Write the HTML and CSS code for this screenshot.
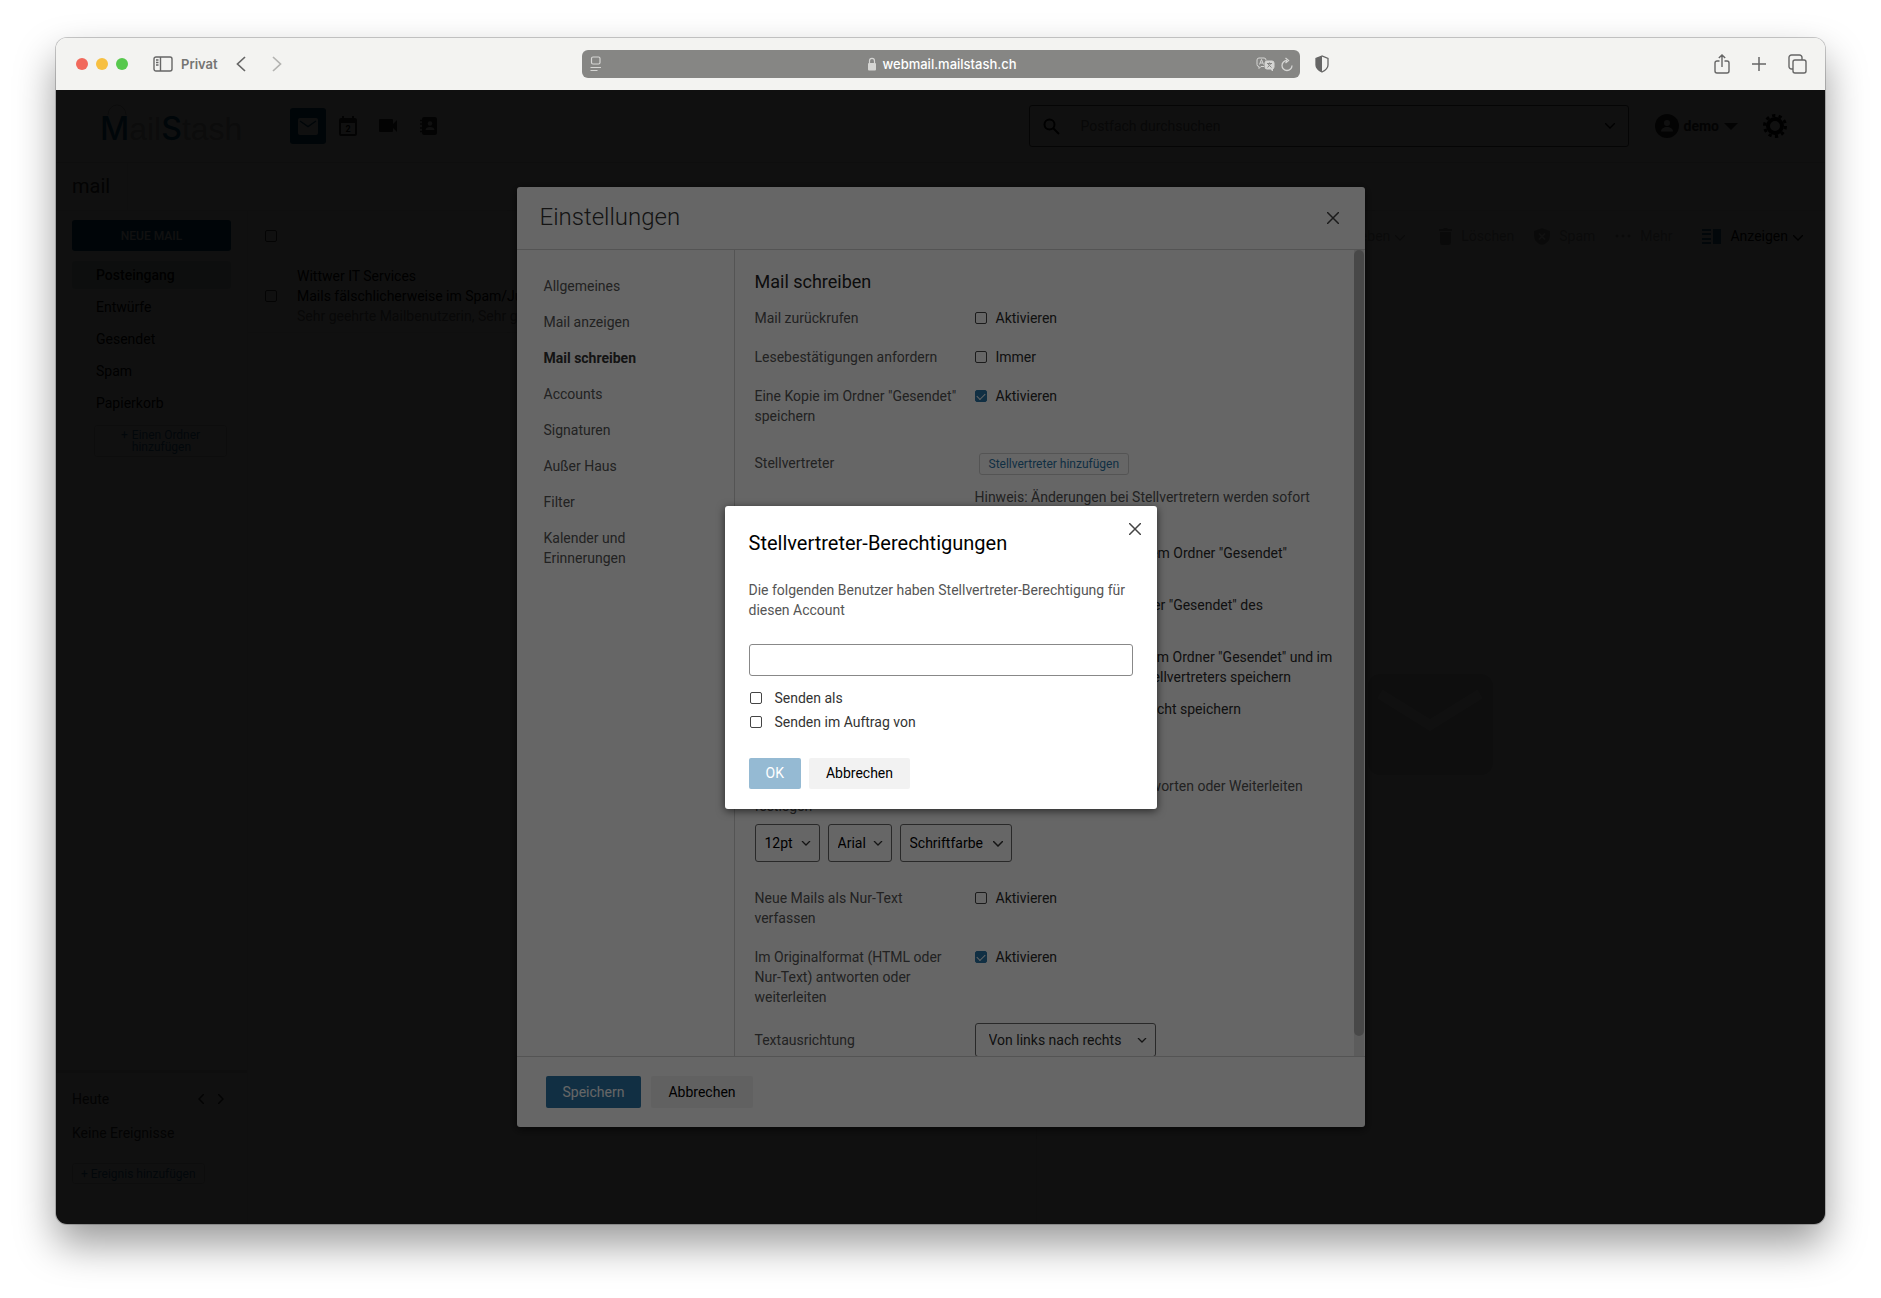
FILE: index.html
```html
<!DOCTYPE html>
<html lang="de">
<head>
    <meta charset="UTF-8">
    <meta name="viewport" content="width=device-width, initial-scale=1.0">
    <title>MailStash - Einstellungen</title>
    <link rel="stylesheet" href="styles.css">
</head>
<body>
    <div class="window">
        <!-- Browser toolbar -->
        <div class="browser-bar">
            <div class="bar-left">
                <span class="light red"></span>
                <span class="light yellow"></span>
                <span class="light green"></span>
                <svg class="icon-sidebar" width="20" height="16" viewBox="0 0 20 16" fill="none" stroke="currentColor" stroke-width="1.4"><rect x="1" y="1" width="18" height="14" rx="2"/><path d="M7.5 1v14M3 4h2.5M3 6.5h2.5M3 9h2.5"/></svg>
                <span class="private">Privat</span>
                <svg class="icon-back" width="10" height="16" viewBox="0 0 10 16" fill="none" stroke="currentColor" stroke-width="1.7"><path d="M9 1L1.5 8 9 15"/></svg>
                <svg class="icon-forward" width="10" height="16" viewBox="0 0 10 16" fill="none" stroke="currentColor" stroke-width="1.7"><path d="M1 1l7.5 7L1 15"/></svg>
            </div>
            <div class="address">
                <svg width="12" height="16" viewBox="0 0 12 16" fill="none" stroke="currentColor" stroke-width="1.2"><rect x="1.5" y="1" width="8.5" height="7" rx="1.5"/><path d="M.5 11.5h10.5M.5 14.5h7"/></svg>
                <div class="host">
                    <svg width="10" height="14" viewBox="0 0 10 14"><rect x="1" y="6" width="8" height="7.5" rx="1" fill="currentColor"/><path d="M2.5 6V4a2.5 2.7 0 0 1 5 0v2" fill="none" stroke="currentColor" stroke-width="1.2"/></svg>
                    <span>webmail.mailstash.ch</span>
                </div>
                <div class="address-actions">
                    <svg width="19" height="14" viewBox="0 0 19 14" fill="none" stroke="currentColor"><path d="M8 9.5H5L3 11.5v-2a2 2 0 0 1-2-2V3a2 2 0 0 1 2-2h5a2 2 0 0 1 2 2v.5M3.500 7.500l2-5 2 5M4.200 6h2.600"/><rect x="9" y="4" width="9" height="8" rx="2" fill="currentColor"/><path d="M15 12l1.500 2V11" fill="currentColor"/><path d="M11 6.500h5M13.500 5.500v1M15 6.500l-3.500 4M12 7l3.500 3.500" stroke="#868684"/></svg>
                    <svg width="12" height="15" viewBox="0 0 12 15" fill="none" stroke="currentColor" stroke-width="1.3"><path d="M6 3.500A5 5 0 1 0 11 8.500M4.500 1l3 2.500-3 2.500"/></svg>
                </div>
            </div>
            <div class="bar-right">
                <svg width="14" height="18" viewBox="0 0 14 18"><path d="M7 1L1 3.500V10c0 3.500 3 5.500 6 7 3-1.500 6-3.500 6-7V3.500z" fill="none" stroke="currentColor" stroke-width="1.3"/><path d="M7 1L1 3.500V10c0 3.500 3 5.500 6 7z" fill="currentColor"/></svg>
                <div class="bar-actions">
                    <svg width="16" height="20" viewBox="0 0 16 20" fill="none" stroke="currentColor" stroke-width="1.4"><path d="M5.500 7H3a2 2 0 0 0-2 2v8a2 2 0 0 0 2 2h10a2 2 0 0 0 2-2V9a2 2 0 0 0-2-2h-2.500M8 13V1M4.800 4L8 1l3.200 3"/></svg>
                    <svg width="14" height="14" viewBox="0 0 14 14" fill="none" stroke="currentColor" stroke-width="1.5"><path d="M7 0v14M0 7h14"/></svg>
                    <svg width="19" height="20" viewBox="0 0 19 20" fill="none" stroke="currentColor" stroke-width="1.4"><rect x="5" y="6" width="13" height="13" rx="2"/><path d="M5 15H3.500A2.500 2.500 0 0 1 1 12.500v-9A2.500 2.500 0 0 1 3.500 1h8A2.500 2.500 0 0 1 14 3.500V6"/></svg>
                </div>
            </div>
        </div>

        <!-- Webmail page -->
        <div class="page">
            <header class="app-header">
                <div class="logo">
                    <svg class="logo-handle" width="20" height="12" viewBox="0 0 20 12" fill="none" stroke="currentColor"><path d="M1 12a9 10 0 0 1 18 0"/></svg>
                    <b>M</b>ail<b>S</b>tash
                </div>
                <nav class="app-nav">
                    <a href="#" class="app-link active" aria-label="Mail"><svg width="20" height="17" viewBox="0 0 20 17"><rect width="20" height="17" rx="2" fill="#fff"/><path d="M2 3l8 5.500L18 3" fill="none" stroke="#00507d" stroke-width="1.5"/></svg></a>
                    <a href="#" class="app-link" aria-label="Kalender"><svg width="18" height="20" viewBox="0 0 18 20"><path d="M3 0h2v2h8V0h2v2h1a2 2 0 0 1 2 2v14a2 2 0 0 1-2 2H2a2 2 0 0 1-2-2V4a2 2 0 0 1 2-2h1zM2 7v11h14V7z" fill="currentColor"/><text x="9" y="16" font-size="9" font-weight="700" text-anchor="middle">2</text></svg></a>
                    <a href="#" class="app-link" aria-label="Video"><svg width="18" height="14" viewBox="0 0 18 14"><path d="M1 0h12a1 1 0 0 1 1 1v4l4-4v12l-4-4v3a1 1 0 0 1-1 1H1a1 1 0 0 1-1-1V1a1 1 0 0 1 1-1z" fill="currentColor"/></svg></a>
                    <a href="#" class="app-link" aria-label="Kontakte"><svg width="17" height="18" viewBox="0 0 17 18"><rect x="2" width="15" height="18" rx="2" fill="currentColor"/><path d="M0 3.500h4M0 7h4M0 11h4M0 14.500h4" stroke="currentColor" stroke-width="1.5"/><circle cx="10" cy="6.500" r="2.200" fill="#fff"/><path d="M5.500 13c0-4 9-4 9 0z" fill="#fff"/></svg></a>
                </nav>
                <div class="search">
                    <svg width="17" height="17" viewBox="0 0 17 17" fill="none" stroke="currentColor" stroke-width="2"><circle cx="6.500" cy="6.500" r="5"/><path d="M10 10l6 6"/></svg>
                    <input type="text" placeholder="Postfach durchsuchen" aria-label="Postfach durchsuchen">
                    <svg width="10" height="6" viewBox="0 0 10 6" fill="none" stroke="currentColor" stroke-width="1.3"><path d="M0 0l5 5 5-5"/></svg>
                </div>
                <button class="user">
                    <svg width="24" height="24" viewBox="0 0 24 24"><circle cx="12" cy="12" r="12" fill="currentColor"/><circle cx="12" cy="9" r="3" fill="#fff"/><path d="M6 17.500c0-6 12-6 12 0z" fill="#fff"/></svg>
                    <span>demo</span>
                    <svg width="14" height="7" viewBox="0 0 14 7"><path d="M0 0h14L7 7z" fill="currentColor"/></svg>
                </button>
                <button class="gear" aria-label="Einstellungen">
                    <svg width="24" height="24" viewBox="0 0 24 24" fill="none" stroke="currentColor"><circle cx="12" cy="12" r="7" stroke-width="4"/><circle cx="12" cy="12" r="10.500" stroke-width="3" stroke-dasharray="3.300 3.300"/></svg>
                </button>
            </header>

            <div class="tabs">
                <a href="#" class="tab">mail</a>
            </div>

            <div class="main">
                <aside class="sidebar">
                    <button class="new-mail">NEUE MAIL</button>
                    <ul class="folders">
                        <li class="selected">Posteingang</li>
                        <li>Entwürfe</li>
                        <li>Gesendet</li>
                        <li>Spam</li>
                        <li>Papierkorb</li>
                    </ul>
                    <button class="outline-btn add-folder"><span>+</span><span>Einen Ordner hinzufügen</span></button>
                    <div class="mini-calendar">
                        <div class="mini-head">
                            <span>Heute</span>
                            <div class="mini-nav">
                                <svg width="6" height="10" viewBox="0 0 6 10" fill="none" stroke="currentColor" stroke-width="1.5"><path d="M6 0L1 5l5 5"/></svg>
                                <svg width="6" height="10" viewBox="0 0 6 10" fill="none" stroke="currentColor" stroke-width="1.5"><path d="M0 0l5 5-5 5"/></svg>
                            </div>
                        </div>
                        <p>Keine Ereignisse</p>
                        <button class="outline-btn">+ Ereignis hinzufügen</button>
                    </div>
                </aside>

                <div class="content">
                    <div class="toolbar">
                        <input type="checkbox" aria-label="Alle auswählen">
                        <div class="tools">
                            <button class="tool faded move">Verschieben <svg class="arrow" width="10" height="6" viewBox="0 0 10 6" fill="none" stroke="currentColor" stroke-width="1.3"><path d="M0 0l5 5 5-5"/></svg></button>
                            <button class="tool faded"><svg width="13" height="17" viewBox="0 0 13 17" fill="currentColor"><path d="M0 1h4l1-1h3l1 1h4v2H0zM1 4h11v11a2 2 0 0 1-2 2H3a2 2 0 0 1-2-2z"/></svg> Löschen</button>
                            <button class="tool faded"><svg width="16" height="17" viewBox="0 0 16 17"><path d="M8 0l8 3v5c0 5-4 8-8 9-4-1-8-4-8-9V3z" fill="currentColor"/><path d="M5 5.500l6 6M11 5.500l-6 6" stroke="#fff" stroke-width="1.5"/></svg> Spam</button>
                            <button class="tool faded"><svg width="16" height="4" viewBox="0 0 16 4" fill="currentColor"><circle cx="2" cy="2" r="1.500"/><circle cx="8" cy="2" r="1.500"/><circle cx="14" cy="2" r="1.500"/></svg> Mehr</button>
                            <button class="tool view"><svg class="blue" width="19" height="15" viewBox="0 0 19 15" fill="currentColor"><path d="M0 0h9v2H0zM0 4h9v2H0zM0 9h9v2H0zM0 13h9v2H0zM11 0h8v15h-8z"/></svg> Anzeigen <svg class="arrow" width="10" height="6" viewBox="0 0 10 6" fill="none" stroke="currentColor" stroke-width="1.3"><path d="M0 0l5 5 5-5"/></svg></button>
                        </div>
                    </div>
                    <div class="panes">
                        <div class="list">
                            <div class="message">
                                <input type="checkbox" aria-label="Nachricht auswählen">
                                <div>
                                    <p>Wittwer IT Services</p>
                                    <p>Mails fälschlicherweise im Spam/Junk</p>
                                    <p class="excerpt">Sehr geehrte Mailbenutzerin, Sehr geehrter Mailbenutzer</p>
                                </div>
                            </div>
                        </div>
                        <div class="preview">
                            <svg width="125" height="101" viewBox="0 0 125 101"><rect width="125" height="101" rx="12" fill="#dedede"/><path d="M12 20l50 31 50-31" fill="none" stroke="#fff" stroke-width="10"/></svg>
                        </div>
                    </div>
                </div>
            </div>

            <!-- Settings dialog -->
            <div class="overlay overlay-dark">
                <section class="dialog settings" role="dialog" aria-labelledby="settings-title">
                    <div class="settings-head">
                        <h1 id="settings-title">Einstellungen</h1>
                        <button class="close" aria-label="Schließen"><svg width="12" height="12" viewBox="0 0 12 12" fill="none" stroke="currentColor" stroke-width="1.5"><path d="M0 0l12 12M12 0L0 12"/></svg></button>
                    </div>
                    <div class="settings-body">
                        <nav class="settings-nav">
                            <a href="#">Allgemeines</a>
                            <a href="#">Mail anzeigen</a>
                            <a href="#" class="current">Mail schreiben</a>
                            <a href="#">Accounts</a>
                            <a href="#">Signaturen</a>
                            <a href="#">Außer Haus</a>
                            <a href="#">Filter</a>
                            <a href="#">Kalender und Erinnerungen</a>
                        </nav>
                        <div class="settings-content">
                            <h2>Mail schreiben</h2>
                            <div class="row">
                                <span class="row-label">Mail zurückrufen</span>
                                <label class="check"><input type="checkbox">Aktivieren</label>
                            </div>
                            <div class="row">
                                <span class="row-label">Lesebestätigungen anfordern</span>
                                <label class="check"><input type="checkbox">Immer</label>
                            </div>
                            <div class="row">
                                <span class="row-label">Eine Kopie im Ordner "Gesendet" speichern</span>
                                <label class="check"><input type="checkbox" checked>Aktivieren</label>
                            </div>
                            <div class="row delegates">
                                <span class="row-label">Stellvertreter</span>
                                <div class="delegate-options">
                                    <button class="outline-btn add-delegate">Stellvertreter hinzufügen</button>
                                    <p class="hint">Hinweis: Änderungen bei Stellvertretern werden sofort gespeichert.</p>
                                    <label class="option"><input type="radio" name="sent" checked><span>Gesendete Mails nur in dem Ordner "Gesendet" speichern</span></label>
                                    <label class="option"><input type="radio" name="sent"><span>Gesendete Mails im Ordner "Gesendet" des Stellvertreters speichern</span></label>
                                    <label class="option"><input type="radio" name="sent"><span>Gesendete Mails in meinem Ordner "Gesendet" und im Ordner "Gesendet" des Stellvertreters speichern</span></label>
                                    <label class="option"><input type="radio" name="sent"><span>Kopie gesendeter Mails nicht speichern</span></label>
                                </div>
                            </div>
                            <p class="font-note">Schriftart, Schriftgröße und die Schriftfarbe beim Verfassen, Antworten oder Weiterleiten festlegen</p>
                            <div class="font-row">
                                <div class="select size"><select aria-label="Schriftgröße"><option>12pt</option></select><svg width="10" height="6" viewBox="0 0 10 6" fill="none" stroke="currentColor" stroke-width="1.3"><path d="M1 0l4 4 4-4"/></svg></div>
                                <div class="select family"><select aria-label="Schriftart"><option>Arial</option></select><svg width="10" height="6" viewBox="0 0 10 6" fill="none" stroke="currentColor" stroke-width="1.3"><path d="M1 0l4 4 4-4"/></svg></div>
                                <div class="select color"><select aria-label="Schriftfarbe"><option>Schriftfarbe</option></select><svg width="10" height="6" viewBox="0 0 10 6" fill="none" stroke="currentColor" stroke-width="1.5"><path d="M0 0l5 5 5-5"/></svg></div>
                            </div>
                            <div class="row">
                                <span class="row-label">Neue Mails als Nur-Text verfassen</span>
                                <label class="check"><input type="checkbox">Aktivieren</label>
                            </div>
                            <div class="row compact">
                                <span class="row-label">Im Originalformat (HTML oder Nur-Text) antworten oder weiterleiten</span>
                                <label class="check"><input type="checkbox" checked>Aktivieren</label>
                            </div>
                            <div class="row direction-row">
                                <label class="row-label" for="direction">Textausrichtung</label>
                                <div class="select direction"><select id="direction"><option>Von links nach rechts</option></select><svg width="10" height="6" viewBox="0 0 10 6" fill="none" stroke="currentColor" stroke-width="1.3"><path d="M1 0l4 4 4-4"/></svg></div>
                            </div>
                        </div>
                        <div class="scrollbar"><div class="thumb"></div></div>
                    </div>
                    <div class="settings-foot">
                        <button class="btn primary">Speichern</button>
                        <button class="btn">Abbrechen</button>
                    </div>
                </section>
            </div>

            <!-- Delegate permissions dialog -->
            <div class="overlay">
                <form class="dialog delegate" role="dialog" aria-labelledby="delegate-title">
                    <button type="button" class="close" aria-label="Schließen"><svg width="12" height="12" viewBox="0 0 12 12" fill="none" stroke="currentColor" stroke-width="1.5"><path d="M0 0l12 12M12 0L0 12"/></svg></button>
                    <h2 id="delegate-title">Stellvertreter-Berechtigungen</h2>
                    <p>Die folgenden Benutzer haben Stellvertreter-Berechtigung für diesen Account</p>
                    <input type="text" class="delegate-name" aria-label="Benutzer">
                    <label class="perm"><input type="checkbox">Senden als</label>
                    <label class="perm"><input type="checkbox">Senden im Auftrag von</label>
                    <div class="delegate-actions">
                        <button type="submit" class="btn primary" disabled>OK</button>
                        <button type="button" class="btn">Abbrechen</button>
                    </div>
                </form>
            </div>
        </div>
    </div>
</body>
</html>
```
FILE: styles.css
```css
/* General styling */
* {
    box-sizing: border-box;
}
body {
    margin: 0;
    min-height: 100vh;
    padding: 38px 56px 74px;
    display: flex;
    background-color: #fff;
    color: #000;
    font-family: Roboto, sans-serif;
    font-size: 14px;
    line-height: 20px;
}
h1, h2, p, ul {
    margin: 0;
    padding: 0;
    font-weight: 400;
}
a {
    color: inherit;
    text-decoration: none;
}
button {
    margin: 0;
    padding: 0;
    border: none;
    background: none;
    color: inherit;
    font: inherit;
    cursor: pointer;
}
svg {
    display: block;
    flex: none;
}
input[type="checkbox"] {
    appearance: none;
    flex: none;
    width: 12px;
    height: 12px;
    margin: 0;
    border: 1px solid #444;
    border-radius: 2px;
    display: grid;
    place-items: center;
}
input[type="checkbox"]:checked {
    background-color: #2b76a8;
    border-color: #2b76a8;
}
input[type="checkbox"]:checked::after {
    content: "";
    width: 7px;
    height: 4px;
    margin-bottom: 2px;
    border-left: 1px solid #fff;
    border-bottom: 1px solid #fff;
    transform: rotate(-45deg);
}

/* Browser window */
.window {
    flex: 1;
    display: flex;
    flex-direction: column;
    border-radius: 11px;
    overflow: hidden;
    box-shadow: 0 0 0 1px rgba(0, 0, 0, 0.2), 0 20px 40px rgba(0, 0, 0, 0.4);
}
.browser-bar {
    display: grid;
    grid-template-columns: 1fr minmax(0, 718px) 1fr;
    align-items: center;
    height: 52px;
    background-color: #f3f3f1;
    color: #666;
    font-family: Inter, sans-serif;
    font-size: 13px;
}
.bar-left {
    display: flex;
    align-items: center;
    gap: 8px;
    padding-left: 20px;
}
.light {
    width: 12px;
    height: 12px;
    border-radius: 50%;
}
.red {
    background-color: #f1695c;
}
.yellow {
    background-color: #f7c041;
}
.green {
    background-color: #57c84d;
}
.icon-sidebar {
    margin-left: 17px;
}
.private {
    font-weight: 600;
    color: #757573;
}
.icon-back {
    margin-left: 10px;
}
.icon-forward {
    margin-left: 18px;
    color: #b3b3b1;
}
.address {
    display: flex;
    align-items: center;
    justify-content: space-between;
    height: 28px;
    padding: 0 6px 0 8px;
    border-radius: 6px;
    background-color: #868684;
    color: #d5d5d3;
}
.host {
    display: flex;
    align-items: center;
    gap: 5px;
    margin-left: 26px;
}
.host span {
    color: #fff;
    font-weight: 500;
}
.address-actions {
    display: flex;
    align-items: center;
    gap: 6px;
}
.bar-right {
    display: flex;
    align-items: center;
    justify-content: space-between;
    padding: 0 18px 0 15px;
}
.bar-actions {
    display: flex;
    align-items: center;
    gap: 22px;
}

/* Webmail page */
.page {
    position: relative;
    flex: 1;
    display: flex;
    flex-direction: column;
    background-color: #fff;
}
.app-header {
    display: flex;
    align-items: center;
    height: 73px;
    padding: 0 38px 0 44px;
    border-bottom: 1px solid #e0e0e0;
}
.logo {
    position: relative;
    width: 190px;
    padding-top: 6px;
    color: #bbb;
    font-family: "Liberation Sans", sans-serif;
    font-size: 32px;
    line-height: 40px;
}
.logo b {
    color: #0a5c94;
    font-family: Inter, sans-serif;
    font-weight: 500;
}
.logo-handle {
    position: absolute;
    left: 7px;
    top: 0;
}
.app-nav {
    display: flex;
    gap: 4px;
    margin-right: auto;
    color: #333;
}
.app-link {
    display: grid;
    place-items: center;
    width: 36px;
    height: 36px;
    border-radius: 3px;
}
.app-link.active {
    background-color: #00507d;
}
.search {
    display: flex;
    align-items: center;
    gap: 19px;
    width: 600px;
    max-width: 40%;
    height: 42px;
    padding: 0 13px;
    border: 1px solid #555;
    border-radius: 3px;
}
.search input {
    flex: 1;
    min-width: 0;
    border: none;
    outline: none;
    background: none;
    font: inherit;
}
.search input::placeholder {
    color: #808080;
}
.user {
    display: flex;
    align-items: center;
    gap: 5px;
    margin-left: 26px;
    color: #333;
    font-weight: 700;
}
.gear {
    margin-left: 25px;
}
.tabs {
    display: flex;
    height: 48px;
    border-bottom: 1px solid #e8e8e8;
}
.tab {
    width: 72px;
    padding-left: 16px;
    border-right: 1px solid #e8e8e8;
    color: #333;
    font-size: 20px;
    line-height: 46px;
}
.main {
    flex: 1;
    display: flex;
}

/* Sidebar */
.sidebar {
    display: flex;
    flex-direction: column;
    width: 192px;
    padding-top: 9px;
    border-right: 1px solid #e8e8e8;
}
.new-mail {
    height: 31px;
    margin: 0 16px 10px;
    border-radius: 3px;
    background-color: #00507d;
    color: #fff;
    font-size: 12px;
    font-weight: 500;
}
.folders {
    display: flex;
    flex-direction: column;
    gap: 4px;
    margin: 0 16px;
    list-style: none;
}
.folders li {
    padding-left: 24px;
    border-radius: 3px;
    line-height: 28px;
}
.folders .selected {
    background-color: #d5e6e0;
    font-weight: 500;
}
.outline-btn {
    border: 1px solid #d2d2d2;
    border-radius: 3px;
    color: #2b76a8;
    font-size: 12px;
}
.add-folder {
    display: flex;
    gap: 4px;
    margin: 8px 20px 0 38px;
    padding: 3px 16px 3px 26px;
    line-height: 12px;
    text-align: left;
}
.mini-calendar {
    margin-top: auto;
    padding: 16px 16px 40px;
    border-top: 3px solid #e0e0e0;
    color: #333;
}
.mini-head {
    display: flex;
    align-items: center;
    justify-content: space-between;
    margin-bottom: 14px;
    padding-right: 7px;
}
.mini-nav {
    display: flex;
    gap: 14px;
}
.mini-calendar .outline-btn {
    height: 21px;
    margin-top: 20px;
    padding: 0 8px;
    line-height: 12px;
}

/* Message list and preview */
.content {
    flex: 1;
    display: flex;
    flex-direction: column;
}
.toolbar {
    display: flex;
    align-items: center;
    justify-content: space-between;
    height: 50px;
    padding: 0 22px 0 17px;
}
.tools {
    display: flex;
    align-items: center;
    gap: 20px;
}
.tool {
    display: flex;
    align-items: center;
    gap: 9px;
}
.tool .arrow {
    margin-top: 4px;
}
.move, .view {
    gap: 5px;
}
.move {
    margin-right: 14px;
}
.view {
    margin-left: 10px;
}
.view .blue {
    margin-right: 4px;
}
.faded {
    color: #aaa;
}
.blue {
    color: #2b76a8;
}
.panes {
    flex: 1;
    display: flex;
}
.list {
    width: 50%;
    border-right: 1px solid #e8e8e8;
}
.message {
    display: flex;
    align-items: center;
    gap: 20px;
    padding: 5px 17px 6px;
    border-bottom: 1px solid #e8e8e8;
}
.excerpt {
    color: #808080;
}
.preview {
    flex: 1;
    display: grid;
    place-items: center;
    padding-bottom: 36px;
}

/* Dialogs */
.overlay {
    position: absolute;
    inset: 0;
    display: grid;
    place-items: center;
    background-color: rgba(0, 0, 0, 0.6);
}
.overlay-dark {
    background-color: rgba(0, 0, 0, 0.84);
}
.dialog {
    border-radius: 3px;
    background-color: #fff;
    box-shadow: 0 2px 8px rgba(0, 0, 0, 0.6);
}
.close {
    display: grid;
    place-items: center;
    width: 24px;
    height: 24px;
    color: #444;
}
.btn {
    height: 32px;
    padding: 0 17px;
    border-radius: 2px;
    background-color: #f2f2f2;
}
.btn.primary {
    background-color: #2b76a8;
    color: #fff;
}
.btn.primary:disabled {
    background-color: #95bad3;
}

/* Settings dialog */
.settings {
    display: flex;
    flex-direction: column;
    width: 48%;
    max-width: 848px;
    height: 940px;
}
.settings-head {
    display: flex;
    align-items: center;
    justify-content: space-between;
    height: 63px;
    padding: 0 20px 0 23px;
    border-bottom: 1px solid #d2d2d2;
}
.settings-head h1 {
    padding-bottom: 2px;
    color: #333;
    font-size: 24px;
    font-weight: 300;
}
.settings-body {
    flex: 1;
    display: flex;
    min-height: 0;
    padding-right: 1px;
}
.settings-nav {
    width: 218px;
    padding: 18px 60px 0 27px;
    border-right: 1px solid #d2d2d2;
    color: #555;
}
.settings-nav a {
    display: block;
    padding: 8px 0;
}
.settings-nav .current {
    color: #333;
    font-weight: 700;
}
.settings-content {
    flex: 1;
    padding: 20px 20px 0;
    overflow: hidden;
}
.settings-content h2 {
    margin-bottom: 14px;
    color: #222;
    font-size: 18px;
    line-height: 24px;
}
.row {
    display: flex;
    margin-bottom: 19px;
}
.row.compact {
    margin-bottom: 16px;
}
.row-label {
    flex: none;
    width: 204px;
    margin-right: 16px;
    color: #555;
}
.check {
    display: flex;
    align-items: center;
    gap: 9px;
    height: 20px;
    color: #2b2b2b;
}
.row.delegates {
    margin: 27px 0 57px;
}
.delegate-options {
    display: flex;
    flex-direction: column;
    align-items: flex-start;
    gap: 12px;
    color: #2b2b2b;
}
.add-delegate {
    height: 22px;
    margin-left: 4px;
    padding: 0 9px;
    line-height: 16px;
}
.hint {
    margin-bottom: 4px;
    color: #555;
}
.option {
    display: flex;
    gap: 9px;
}
.option input {
    width: 13px;
    height: 13px;
    margin: 4px 0 0;
}
.font-note {
    max-width: 570px;
    color: #555;
}
.font-row {
    display: flex;
    gap: 8px;
    margin: 8px 0 26px;
}
.select {
    position: relative;
    color: #333;
}
.select select {
    appearance: none;
    width: 100%;
    height: 38px;
    padding: 0 9px;
    border: 1px solid #666;
    border-radius: 3px;
    background: none;
    color: #000;
    font: inherit;
}
.select svg {
    position: absolute;
    right: 9px;
    top: 17px;
}
.size {
    width: 65px;
}
.family {
    width: 64px;
}
.color {
    width: 112px;
}
.direction {
    width: 181px;
}
.select.direction select {
    height: 34px;
    padding: 0 13px;
    color: #2b2b2b;
}
.select.direction svg {
    top: 15px;
}
.direction-row {
    align-items: center;
}
.scrollbar {
    width: 10px;
    background-color: #e6e6e6;
}
.thumb {
    height: calc(100% - 20px);
    border-radius: 5px;
    background-color: #b5b5b5;
}
.settings-foot {
    display: flex;
    gap: 10px;
    height: 71px;
    padding: 19px 29px;
    border-top: 1px solid #d2d2d2;
}

/* Delegate dialog */
.delegate {
    position: relative;
    display: flex;
    flex-direction: column;
    width: 432px;
    padding: 24px 24px 20px;
}
.delegate .close {
    position: absolute;
    right: 10px;
    top: 11px;
}
.delegate h2 {
    margin-bottom: 24px;
    font-size: 20px;
    line-height: 26px;
}
.delegate p {
    color: #555;
}
.delegate-name {
    height: 32px;
    margin: 24px 0 10px;
    border: 1px solid #888;
    border-radius: 3px;
    font: inherit;
}
.perm {
    display: flex;
    align-items: center;
    gap: 13px;
    height: 24px;
    padding-left: 1px;
    color: #333;
}
.delegate-actions {
    display: flex;
    gap: 8px;
    margin-top: 24px;
}
.delegate-actions .btn {
    height: 31px;
}
```
